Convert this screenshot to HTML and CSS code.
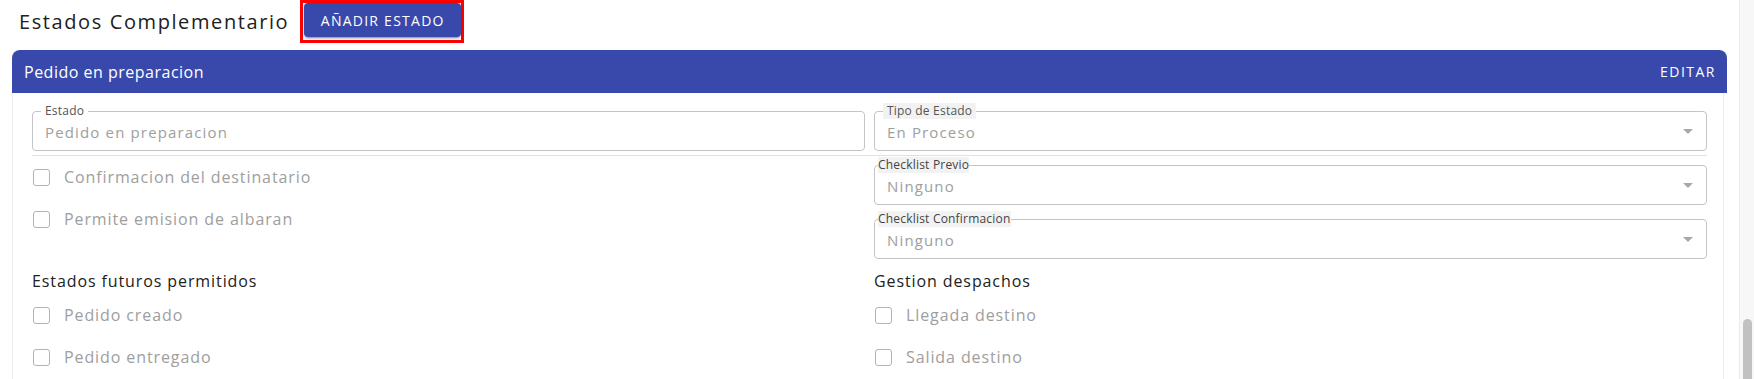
FILE: index.html
```html
<!DOCTYPE html>
<html lang="es">
<head>
<meta charset="utf-8">
<title>Estados Complementario</title>
<link rel="stylesheet" href="styles.css">
</head>
<body>
<div class="app">
  <div class="topbar">
    <h1 class="title">Estados Complementario</h1>
    <div class="btn-frame"><button class="btn">AÑADIR ESTADO</button></div>
  </div>

  <section class="panel">
    <header class="panel-header">
      <span class="panel-title">Pedido en preparacion</span>
      <span class="panel-action">EDITAR</span>
    </header>
    <div class="panel-body">
      <div class="grid-top">
        <div class="field">
          <span class="field-label">Estado</span>
          <span class="field-value">Pedido en preparacion</span>
        </div>
        <div class="field">
          <span class="field-label shaded">Tipo de Estado</span>
          <span class="field-value">En Proceso</span>
          <span class="caret"></span>
        </div>
        <div class="divider"></div>
      </div>

      <div class="grid-mid">
        <div class="col-checks">
          <label class="check-row"><span class="box"></span><span class="check-text">Confirmacion del destinatario</span></label>
          <label class="check-row"><span class="box"></span><span class="check-text">Permite emision de albaran</span></label>
        </div>
        <div class="col-fields">
          <div class="field">
            <span class="field-label tight shaded">Checklist Previo</span>
            <span class="field-value">Ninguno</span>
            <span class="caret"></span>
          </div>
          <div class="field">
            <span class="field-label tight shaded">Checklist Confirmacion</span>
            <span class="field-value">Ninguno</span>
            <span class="caret"></span>
          </div>
        </div>
      </div>

      <div class="grid-bottom">
        <div class="group">
          <h2 class="group-title">Estados futuros permitidos</h2>
          <div class="group-list">
            <label class="check-row"><span class="box"></span><span class="check-text">Pedido creado</span></label>
            <label class="check-row"><span class="box"></span><span class="check-text">Pedido entregado</span></label>
          </div>
        </div>
        <div class="group">
          <h2 class="group-title">Gestion despachos</h2>
          <div class="group-list">
            <label class="check-row"><span class="box"></span><span class="check-text">Llegada destino</span></label>
            <label class="check-row"><span class="box"></span><span class="check-text">Salida destino</span></label>
          </div>
        </div>
      </div>
    </div>
  </section>
</div>
<div class="scrollbar"><div class="thumb"></div></div>
</body>
</html>
```

FILE: styles.css
```css
html, body {
  margin: 0;
  height: 100%;
  overflow: hidden;
}

body {
  display: flex;
  background: #ffffff;
  font-family: "Open Sans", "Lato", sans-serif;
  color: #212121;
}

.app {
  flex: 1;
  min-width: 0;
}

.topbar {
  display: flex;
  align-items: center;
  gap: 11px;
  height: 43px;
  padding-left: 19px;
}

.title {
  margin: 0;
  font-size: 20px;
  font-weight: 400;
  letter-spacing: 1.6px;
  color: #212121;
  line-height: 24px;
}

.btn-frame {
  display: flex;
  align-self: flex-start;
  border: 3px solid #ff0000;
  padding: 0 0 3px 1px;
}

.btn {
  width: 157px;
  height: 34px;
  border: none;
  border-radius: 4px;
  background: #3949ab;
  color: #ffffff;
  font-family: "Open Sans", sans-serif;
  font-size: 14px;
  font-weight: 500;
  letter-spacing: 1.25px;
  padding: 0;
  box-shadow: 0 3px 1px -2px rgba(0,0,0,.2), 0 2px 2px 0 rgba(0,0,0,.14), 0 1px 5px 0 rgba(0,0,0,.12);
}

.panel {
  margin: 7px 12px 0 12px;
}

.panel-header {
  height: 43px;
  background: #3949ab;
  border-radius: 8px 8px 0 0;
  display: flex;
  align-items: center;
  justify-content: space-between;
  padding: 0 11px 0 12px;
  color: #ffffff;
}

.panel-title {
  font-size: 16px;
  letter-spacing: 0.5px;
}

.panel-action {
  font-size: 14px;
  font-weight: 500;
  letter-spacing: 1.5px;
}

.panel-body {
  margin-right: 3px;
  border-left: 1px solid #ececec;
  border-right: 1px solid #ececec;
  padding: 18px 16px 0 19px;
  height: 300px;
}

.grid-top,
.grid-mid,
.grid-bottom {
  display: grid;
  grid-template-columns: 1fr 1fr;
  column-gap: 9px;
}

.field {
  position: relative;
  box-sizing: border-box;
  height: 40px;
  border: 1px solid #c4c4c4;
  border-radius: 4px;
  display: flex;
  align-items: center;
  padding: 1px 13px 0 12px;
}

.field-label {
  position: absolute;
  top: -9px;
  left: 8px;
  padding: 0 4px;
  background: #ffffff;
  font-size: 12px;
  line-height: 16px;
  letter-spacing: 0.2px;
  color: #555555;
}

.field-label.shaded {
  background: #f2f2f2;
}

.field-label.tight {
  left: 3px;
  padding: 0;
  color: #444444;
}

.field-value {
  flex: 1;
  font-size: 15px;
  letter-spacing: 1.15px;
  color: #9e9e9e;
}

.caret {
  width: 0;
  height: 0;
  border-left: 5px solid transparent;
  border-right: 5px solid transparent;
  border-top: 5px solid #a8a8a8;
}

.divider {
  grid-column: 1 / -1;
  height: 1px;
  margin-top: 4px;
  background: #e0e0e0;
}

.col-fields {
  display: flex;
  flex-direction: column;
  gap: 14px;
  padding-top: 9px;
}

.check-row {
  display: flex;
  align-items: center;
  height: 42px;
}

.box {
  box-sizing: border-box;
  width: 17px;
  height: 17px;
  margin-left: 1px;
  border: 1.5px solid #b3b3b3;
  border-radius: 3px;
  flex: none;
}

.check-text {
  margin-left: 14px;
  font-size: 16px;
  letter-spacing: 0.9px;
  color: #9e9e9e;
}

.grid-bottom {
  margin-top: 12px;
}

.group-title {
  margin: 0;
  font-size: 16px;
  font-weight: 400;
  line-height: 20px;
  letter-spacing: 0.9px;
  color: #212121;
}

.group-list {
  margin-top: 3px;
}

.scrollbar {
  flex: none;
  width: 15px;
  box-sizing: border-box;
  background: #f7f7f7;
  border-left: 1px solid #ebebeb;
  padding: 319px 0 0 3px;
}

.thumb {
  width: 9px;
  height: 120px;
  border-radius: 5px;
  background: #c1c1c1;
}
```
